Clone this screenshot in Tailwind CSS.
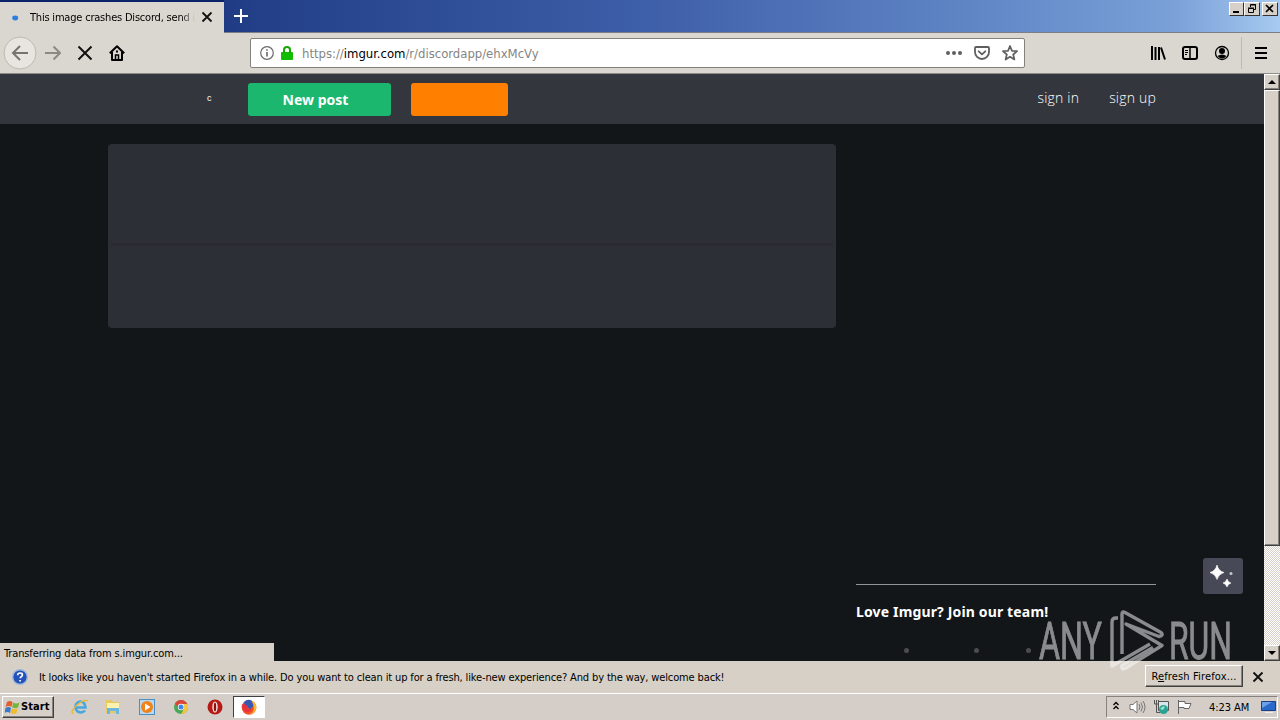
<!DOCTYPE html>
<html lang="en">
<head>
  <meta charset="UTF-8">
  <title>This image crashes Discord, send it</title>
  <meta name="viewport" content="width=device-width, initial-scale=1">
  <script src="https://cdn.jsdelivr.net/npm/@tailwindcss/browser@4"></script>
</head>
<body class="w-[1280px] h-[720px] overflow-hidden bg-[#d6d0c9] text-black text-[11px] font-['DejaVu_Sans_Condensed','DejaVu_Sans',sans-serif]">
  <div class="relative flex flex-col w-[1280px] h-[720px]">

    <!-- Title bar with tabs -->
    <header class="flex h-[33px] shrink-0 border-b border-[#7d7f86] bg-[linear-gradient(to_right,#0a246a,#223f88_20%,#3d5ea8_50%,#6389c8_78%,#7ba1d8_92%,#a6caf0)]">
      <div class="flex items-center w-[224px] h-[33px] bg-[#dad7d0] border-t-2 border-[#0a246a] pl-3">
        <svg class="w-[7px] h-[6px] mr-[11px]" viewBox="0 0 7 6"><ellipse cx="3.2" cy="3" rx="3" ry="2.400" fill="#2f7de1"/></svg>
        <div class="w-[165px] pt-px whitespace-nowrap tracking-[-0.2px] mask-r-from-92% mask-r-to-100%">This image crashes Discord, send it</div>
        <svg class="w-[12px] h-[12px] ml-[6px] mb-px" viewBox="0 0 12 12"><path d="M1.500 1.500l9 9m0-9l-9 9" stroke="#111" stroke-width="1.800"/></svg>
      </div>
      <svg class="w-[16px] h-[16px] mt-2 ml-[9px]" viewBox="0 0 16 16"><path d="M8 1v14M1 8h14" stroke="#fff" stroke-width="2"/></svg>
      <div class="flex ml-auto mr-[2px] mt-[2px] h-[14px]">
        <div class="w-[15px] h-[14px] bg-[#d6d0c8] border border-t-white border-l-white border-b-[#333] border-r-[#333]"><svg class="w-[13px] h-[12px]" viewBox="0 0 13 12"><path d="M3 8h6v2H3z"/></svg></div>
        <div class="w-[16px] h-[14px] bg-[#d6d0c8] border border-t-white border-l-white border-b-[#333] border-r-[#333]"><svg class="w-[14px] h-[12px]" viewBox="0 0 14 12" fill="none" stroke="#000"><path d="M5.500 4V1.500h5v5H9M5 2h6M3.500 5.500h5v4h-5zM3 5h6"/></svg></div>
        <div class="w-[16px] h-[14px] ml-[2px] bg-[#d6d0c8] border border-t-white border-l-white border-b-[#333] border-r-[#333]"><svg class="w-[13px] h-[12px]" viewBox="0 0 13 12"><path d="M3 2l7 7m0-7l-7 7" stroke="#000" stroke-width="1.700"/></svg></div>
      </div>
    </header>

    <!-- Navigation toolbar -->
    <nav class="flex items-center h-[41px] shrink-0 bg-[#dad7d0] border-b border-[#8f8d89] pl-[3px]">
      <svg class="w-[34px] h-[34px]" viewBox="0 0 34 34" fill="none"><circle cx="17" cy="17" r="16" fill="#e8e5e0" stroke="#bdb9b2"/><path d="M25 17H10M17 10l-7 7 7 7" stroke="#77746f" stroke-width="2"/></svg>
      <svg class="w-[16px] h-[16px] ml-2" viewBox="0 0 16 16" fill="none" stroke="#8d8a85" stroke-width="2"><path d="M0 8h15M8.500 1.500L15 8l-6.500 6.500"/></svg>
      <svg class="w-[16px] h-[16px] ml-4" viewBox="0 0 16 16" stroke="#111" stroke-width="2"><path d="M1.500 1.500l13 13m0-13l-13 13"/></svg>
      <svg class="w-[16px] h-[16px] ml-4" viewBox="0 0 16 16" fill="none" stroke="#000" stroke-width="2"><path d="M.8 8.300L8 1.200l7.200 7.100M3 7v8h10V7" stroke-linejoin="round"/><path d="M6.500 15v-5h3v5" stroke-width="1.500"/><path d="M7 6.500h2"/></svg>
      <div class="flex items-center w-[775px] h-[30px] ml-[125px] bg-white border border-[#85827c] rounded-[2px] pl-[9px] pr-[6px]">
        <svg class="w-[14px] h-[14px]" viewBox="0 0 14 14" fill="none" stroke="#6a6a6a"><circle cx="7" cy="7" r="6.300" stroke-width="1.200"/><path d="M7 6v4.500M7 3.200v1.600" stroke-width="1.600"/></svg>
        <svg class="w-[12px] h-[14px] ml-[7px]" viewBox="0 0 12 14"><rect y="6" width="12" height="8" rx="1" fill="#12bc00"/><path d="M3 7V4a3 3 0 016 0v3" fill="none" stroke="#12a800" stroke-width="2"/></svg>
        <div class="ml-[9px] pt-px whitespace-nowrap text-[13px] text-[#858585] tracking-[-0.02px]">https://<span class="text-black">imgur.com</span>/r/discordapp/ehxMcVy</div>
        <svg class="w-[16px] h-[16px] ml-auto" viewBox="0 0 16 16" fill="#5f5f5f"><circle cx="2" cy="8" r="2"/><circle cx="8" cy="8" r="2"/><circle cx="14" cy="8" r="2"/></svg>
        <svg class="w-[16px] h-[16px] ml-3" viewBox="0 0 16 16" fill="none" stroke="#5f5f5f" stroke-width="1.800" stroke-linecap="round" stroke-linejoin="round"><path d="M2 2h12q1 0 1 1v4a7 7 0 01-14 0V3q0-1 1-1z"/><path d="M4.700 6.300L8 9.400l3.300-3.100"/></svg>
        <svg class="w-[16px] h-[16px] ml-3" viewBox="0 0 16 16" fill="none" stroke="#5f5f5f" stroke-width="1.700" stroke-linejoin="round"><path d="M8 1l2 4.800 5.100.4-3.900 3.300 1.200 5L8 11.800l-4.400 2.700 1.200-5L.9 6.200 6 5.800z"/></svg>
      </div>
      <svg class="w-[16px] h-[16px] ml-[125px]" viewBox="0 0 16 16" stroke="#000" stroke-width="2"><path d="M2 1v14M5.500 2v13M9 2v13"/><path d="M11 2.500l4 12"/></svg>
      <svg class="w-[16px] h-[16px] ml-4" viewBox="0 0 16 16" fill="none" stroke="#000"><rect x="1" y="2" width="14" height="12" rx="2" stroke-width="2"/><path d="M8 2v12" stroke-width="1.500"/><path d="M3 5.500h3M3 7.500h3M3 9.500h2"/></svg>
      <svg class="w-[16px] h-[16px] ml-4" viewBox="0 0 16 16"><circle cx="8" cy="8" r="6.500" fill="none" stroke="#000" stroke-width="1.300"/><circle cx="8" cy="6" r="3"/><path d="M3.500 11q4.500-3 9 0Q8 16 3.500 11z"/></svg>
      <div class="w-px h-[32px] ml-[11px] bg-[#bdb9b3]"></div>
      <svg class="w-[14px] h-[14px] ml-[12px]" viewBox="0 0 14 14" stroke="#000" stroke-width="2"><path d="M1 2h12M1 7h12M1 12h12"/></svg>
    </nav>

    <!-- Page viewport -->
    <div class="flex h-[587px] shrink-0">
      <main class="w-[1264px] bg-[#131619] text-white">
        <div class="flex items-center h-[50px] bg-[#34363d]">
          <span class="w-[41px] ml-[207px] text-[9px] font-['Liberation_Sans',sans-serif]">c</span>
          <button class="w-[143px] h-[33px] rounded-[3px] bg-[#1bb76e] pr-[8px] text-[14px] font-bold font-['Noto_Sans',sans-serif]">New post</button>
          <div class="w-[97px] h-[33px] ml-5 rounded-[3px] bg-[#ff8000]"></div>
          <div class="flex gap-[30px] ml-auto mr-[108px] pb-[3px] text-[14px] tracking-[0.2px] font-light font-['Open_Sans',sans-serif]">
            <a>sign in</a>
            <a>sign up</a>
          </div>
        </div>
        <div class="flex pt-5 pl-[108px]">
          <section class="w-[728px] h-[184px] rounded-[4px] bg-[#2c2f36] pt-[99px] px-[3px]">
            <div class="h-[3px] bg-[#292b31]"></div>
          </section>
          <aside class="w-[300px] ml-5 mt-[440px]">
            <div class="h-px bg-[#92959a]"></div>
            <h2 class="mt-[17px] text-[14px] leading-[20px] font-bold whitespace-nowrap tracking-[0.15px] font-['Noto_Sans',sans-serif]">Love Imgur? Join our team!</h2>
            <div class="flex mt-[26px] pl-[48px]">
              <i class="size-[5px] rounded-full bg-[#4a4c50]"></i>
              <i class="size-[5px] ml-[65px] rounded-full bg-[#4a4c50]"></i>
              <i class="size-[5px] ml-[47px] rounded-full bg-[#4a4c50]"></i>
            </div>
          </aside>
        </div>
      </main>
      <!-- Scrollbar -->
      <div class="flex flex-col w-4 bg-[repeating-conic-gradient(#d6d0c8_0_25%,#ffffff_0_50%)] bg-[length:2px_2px]">
        <div class="h-4 bg-[#d6d0c8] border border-t-white border-l-white border-b-[#404040] border-r-[#404040] shadow-[inset_-1px_-1px_0_#87837c]"><svg class="w-[14px] h-[14px]" viewBox="0 0 14 14"><path d="M3 9l4-4 4 4z"/></svg></div>
        <div class="h-[456px] bg-[#d6d0c8] border border-t-white border-l-white border-b-[#404040] border-r-[#404040] shadow-[inset_-1px_-1px_0_#87837c]"></div>
        <div class="h-4 mt-auto bg-[#d6d0c8] border border-t-white border-l-white border-b-[#404040] border-r-[#404040] shadow-[inset_-1px_-1px_0_#87837c]"><svg class="w-[14px] h-[14px]" viewBox="0 0 14 14"><path d="M3 5l4 4 4-4z"/></svg></div>
      </div>
    </div>

    <!-- Notification bar -->
    <div class="flex items-center h-[32px] shrink-0 bg-[#d6d0c6] pl-3">
      <svg class="w-4 h-4" viewBox="0 0 16 16"><circle cx="8" cy="8" r="7.300" fill="#2452b8" stroke="#9db6dd" stroke-width="1.400"/><path d="M5.700 6.200q0-2.200 2.400-2.200t2.300 2q0 1-1.200 1.700-1 .6-1 1.600M8.100 11v1.600" fill="none" stroke="#fff" stroke-width="1.700"/></svg>
      <p class="ml-[11px] pt-[2px] whitespace-nowrap tracking-[-0.136px]">It looks like you haven't started Firefox in a while. Do you want to clean it up for a fresh, like-new experience? And by the way, welcome back!</p>
      <button class="w-[98px] h-[22px] ml-auto mb-[2px] pt-[2px] bg-[#d6d0c8] border border-t-white border-l-white border-b-[#404040] border-r-[#404040] shadow-[inset_-1px_-1px_0_#87837c] whitespace-nowrap tracking-[0.15px]">R<u>e</u>fresh Firefox...</button>
      <svg class="w-[12px] h-[12px] ml-[9px] mr-[16px]" viewBox="0 0 12 12"><path d="M1.500 1.500l9 9m0-9l-9 9" stroke="#111" stroke-width="1.900"/></svg>
    </div>

    <!-- Taskbar -->
    <footer class="flex items-center h-[27px] shrink-0 bg-[#d5cec8] border-t border-white pl-[2px]">
      <button class="flex items-center w-[52px] h-[22px] bg-[#d6d0c8] border border-t-white border-l-white border-b-[#404040] border-r-[#404040] shadow-[inset_-1px_-1px_0_#87837c] pl-[2px] font-bold">
        <svg class="w-[15px] h-[15px]" viewBox="0 0 15 15"><path d="M2 2q3-2 5.500 0L6.500 7Q4 5 .5 7z" fill="#e3602c"/><path d="M8.200 2.500q3 2 6.300 0l-1.300 4.800q-3 2-6 0z" fill="#79b33a"/><path d="M.5 8q3-2 5.500 0l-1 5q-2.500-2-5.500 0z" fill="#397bc8"/><path d="M6.800 8.300q3 2 6 0l-1.300 4.700q-3 2-6 0z" fill="#f0bb2d"/></svg>
        <span class="ml-px pt-px tracking-[0.1px]">Start</span>
      </button>
      <svg class="w-[18px] h-[18px] ml-[17px]" viewBox="0 0 18 18" fill="none"><path d="M14 12.500A5.500 5.500 0 119 3.500q5 0 5.500 6H5" stroke="#48a7df" stroke-width="2.600"/><path d="M2 16Q-1 13 6 7t11-4" stroke="#e5b93b" stroke-width="1.500"/></svg>
      <svg class="w-[16px] h-[16px] ml-4" viewBox="0 0 16 16"><path d="M1 1h6l1 2h6v11H1z" fill="#e9c95f"/><path d="M2 4h12v5H2z" fill="#fff1ae"/><path d="M2 15v-6h12v6h-3v-3H5v3z" fill="#6bb7df"/></svg>
      <svg class="w-[16px] h-[16px] ml-[18px]" viewBox="0 0 16 16"><rect x=".5" y=".5" width="15" height="15" fill="#b9d8f0" stroke="#4c8fc4"/><circle cx="8" cy="8" r="6" fill="#f08219"/><path d="M6 4.500v7L11.500 8z" fill="#fff"/></svg>
      <svg class="w-[14px] h-[14px] ml-[19px]" viewBox="0 0 14 14"><circle cx="7" cy="7" r="7" fill="#48a853"/><path d="M7 4h6.400A7 7 0 017 14l3-5z" fill="#f5c63c"/><path d="M1 3.500L5 9l2-5h6.300Q11 0 7 0T1 3.500z" fill="#dc4437"/><circle cx="7" cy="7" r="3.200" fill="#fff"/><circle cx="7" cy="7" r="2.500" fill="#4285e8"/></svg>
      <svg class="w-[16px] h-[16px] ml-[19px]" viewBox="0 0 16 16"><circle cx="8" cy="8" r="7.500" fill="#b51a17"/><ellipse cx="8" cy="8" rx="2.700" ry="5.500" fill="#f4e4df"/><ellipse cx="8" cy="8" rx="1.200" ry="4.500" fill="#8e1111"/></svg>
      <div class="flex items-center justify-center w-[32px] h-[22px] ml-[10px] bg-white border border-t-[#404040] border-l-[#404040] border-b-white border-r-white">
        <svg class="w-[16px] h-[16px]" viewBox="0 0 16 16"><circle cx="8" cy="8.500" r="7.300" fill="#f0512a"/><path d="M3 3Q7-1 11 2l1.500 5L9 10 4 7z" fill="#3659b5"/><path d="M.8 6q2-2 4 0l2.500 1.500-2 1.500q3 2.500 6 0Q10 14 5 13 1 11 .8 6z" fill="#e8323c"/><path d="M10 1q6 4 5.300 8-1 6-8 6.500 6-2 5.500-6.500Q12.500 4 10 1z" fill="#ffb92e"/></svg>
      </div>
      <div class="flex items-center w-[172px] h-[22px] ml-auto mr-[2px] border border-t-[#87837c] border-l-[#87837c] border-b-white border-r-white pl-[5px]">
        <svg class="w-[8px] h-[10px] mb-[2px]" viewBox="0 0 8 10" fill="none" stroke="#000" stroke-width="1.300"><path d="M1.500 4L4 1.500 6.500 4M1.500 8L4 5.500 6.500 8"/></svg>
        <svg class="w-[17px] h-[16px] ml-[9px]" viewBox="0 0 17 16" fill="none" stroke="#777"><path d="M1 5.500h3L8 2v12l-4-3.500H1z" fill="#fff"/><path d="M10 5q2 3 0 6M12 3.500q3 4.500 0 9M14 2q4 6 0 12"/></svg>
        <svg class="w-[17px] h-[16px] ml-[7px]" viewBox="0 0 17 16"><path d="M5.500 2.500h10v9h-10z" fill="#d9e6e8" stroke="#555"/><path d="M1.500 1v4h4V1M3.500 1v4M3.500 5v8.500h4" fill="none" stroke="#555"/><circle cx="10.500" cy="10.500" r="4.500" fill="#28a294"/><path d="M7 10q3-4 5-2l-2 3z" fill="#9be0d2"/></svg>
        <svg class="w-[16px] h-[16px] ml-[7px]" viewBox="0 0 16 16" fill="#fff" stroke="#666"><path d="M1.500 1v14M2 2.500h6v2h6l-2 5H7v-1H2"/></svg>
        <span class="ml-[16px] pt-[2px] w-[46px] whitespace-nowrap tracking-[-0.05px]">4:23 AM</span>
        <svg class="w-[15px] h-[14px] ml-[6px]" viewBox="0 0 15 14"><path d="M.5 1.500h14v9H.5z" fill="#2b68cc" stroke="#173f86"/><path d="M1 2h10L1 8z" fill="#6ba1ea"/><path d="M4 12h8v1H4z" fill="#eee"/></svg>
      </div>
    </footer>

    <!-- Status text over the page -->
    <div class="absolute left-0 top-[643px] w-[274px] h-[18px] bg-[#d6d0c8] pl-[4px] leading-[21px] whitespace-nowrap tracking-[-0.13px]">Transferring data from s.imgur.com...</div>

    <!-- Floating sparkle button -->
    <div class="absolute left-[1203px] top-[558px] w-[40px] h-[36px] rounded-[3px] bg-[#474a56]">
      <svg class="w-[40px] h-[36px]" viewBox="0 0 40 36" fill="#fff" stroke="#fff" stroke-width=".6"><path d="M14 7q1.500 6 7 7.500Q15.500 16 14 21.500q-1.500-5.500-7-7Q12.500 13 14 7z"/><path d="M24 21q.8 3 4 4-3.200 1-4 4-.8-3-4-4 3.200-1 4-4z"/><circle cx="28" cy="15.500" r="1.500" fill="#c5c7cc" stroke="none"/></svg>
    </div>

    <!-- Watermark -->
    <svg class="absolute left-[1030px] top-[600px] w-[210px] h-[80px] opacity-50" viewBox="0 0 210 80">
      <g fill="#fff" stroke="#fff" stroke-width=".8" font-family="Roboto, sans-serif" font-size="51">
        <text x="9" y="59" textLength="63" lengthAdjust="spacingAndGlyphs">ANY</text>
        <text x="139" y="59" textLength="63" lengthAdjust="spacingAndGlyphs">RUN</text>
      </g>
      <path d="M88 18h-2q-4 0-4 4v44l38-22M92 54V14q0-3 3-1.500l36 20q3 3-2 4L96 24l36 21.500-37 23q-4 1.500-3-3l31-18" fill="none" stroke="#fff" stroke-width="3.400" stroke-linejoin="round"/>
    </svg>
  </div>
</body>
</html>
